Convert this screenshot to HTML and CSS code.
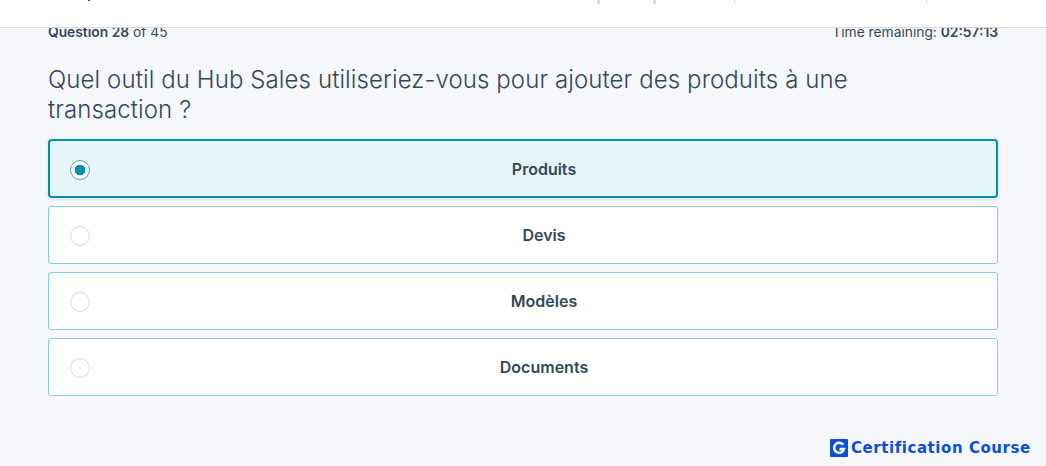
FILE: index.html
```html
<!DOCTYPE html>
<html lang="fr">
<head>
<meta charset="utf-8">
<title>Question 28 of 45</title>
<link rel="stylesheet" href="styles.css">
</head>
<body>
<header class="topbar">
  <span class="mark mark-desc"></span>
  <span class="mark mark-a"></span>
  <span class="mark mark-b"></span>
  <span class="mark mark-c"></span>
  <span class="mark mark-d"></span>
</header>
<main class="content">
  <div class="meta">
    <span><b>Question 28</b> of 45</span>
    <span>Time remaining: <b>02:57:13</b></span>
  </div>
  <h1 class="question">Quel outil du Hub Sales utiliseriez-vous pour ajouter des produits à une transaction ?</h1>
  <div class="options">
    <div class="option selected"><span class="radio"></span><span class="label">Produits</span></div>
    <div class="option"><span class="radio"></span><span class="label">Devis</span></div>
    <div class="option"><span class="radio"></span><span class="label">Modèles</span></div>
    <div class="option"><span class="radio"></span><span class="label">Documents</span></div>
  </div>
</main>
<div class="brand">
  <svg class="brand-icon" width="18" height="18" viewBox="0 0 18 18" aria-hidden="true">
    <rect width="18" height="18" rx="1" fill="#0a50d8"/>
    <path d="M13.2 5.8A5 5 0 1 0 14 10H9.4" fill="none" stroke="#fff" stroke-width="2.6"/>
  </svg>
  <span>Certification Course</span>
</div>
</body>
</html>
```
FILE: styles.css
```css
* { box-sizing: border-box; }
html, body { margin: 0; height: 100%; }
body {
  width: 1046px;
  height: 466px;
  overflow: hidden;
  background: #f5f7fb;
  color: #33475b;
  font-family: "Inter", "Liberation Sans", sans-serif;
  position: relative;
}
.topbar {
  position: relative;
  height: 28px;
  background: #fff;
  border-bottom: 1px solid #d3d9df;
  z-index: 2;
}
.mark { position: absolute; top: 0; background: #d5dfea; }
.mark-desc { left: 88px; width: 2px; height: 1px; background: #33475b; }
.mark-a { left: 597px; width: 3px; height: 4px; }
.mark-b { left: 653px; width: 3px; height: 4px; }
.mark-c { left: 734px; width: 1px; height: 3px; }
.mark-d { left: 926px; width: 1px; height: 3px; }
.content {
  padding: 0 48px;
  width: 1046px;
}
.meta {
  display: flex;
  justify-content: space-between;
  font-size: 13.8px;
  line-height: 20px;
  margin-top: -6px;
  font-weight: 400;
}
.meta b { font-weight: 600; }
.question {
  margin: 23px 0 0;
  font-size: 24px;
  line-height: 30px;
  font-weight: 300;
  letter-spacing: 0.1px;
  width: 850px;
}
.options {
  margin-top: 14px;
  display: flex;
  flex-direction: column;
  gap: 8px;
}
.option {
  position: relative;
  height: 58px;
  display: flex;
  align-items: center;
  justify-content: center;
  padding-left: 42px;
  background: #fff;
  border: 1px solid #7fd1de;
  border-radius: 3px;
  font-size: 16px;
  font-weight: 600;
}
.option.selected {
  height: 59px;
  background: #e5f5f8;
  border: 2px solid #0091ae;
  border-radius: 4px;
  box-shadow: 0 1px 4px rgba(0, 0, 0, 0.12);
}
.radio {
  position: absolute;
  left: 21px;
  top: 19px;
  width: 20px;
  height: 20px;
  border-radius: 50%;
  border: 1.5px solid #d3dbe5;
  background: #fff;
}
.selected .radio {
  left: 20px;
  top: 18.5px;
  border-color: #45a9bf;
  background: radial-gradient(circle, #0091ae 0 5px, #fff 5.6px);
}
.brand {
  position: absolute;
  left: 830px;
  top: 439px;
  display: flex;
  align-items: center;
  gap: 3px;
  color: #0a50d8;
  font-family: "DejaVu Sans", "Liberation Sans", sans-serif;
  font-size: 15px;
  font-weight: 700;
  letter-spacing: 0.56px;
  line-height: 18px;
}
```
